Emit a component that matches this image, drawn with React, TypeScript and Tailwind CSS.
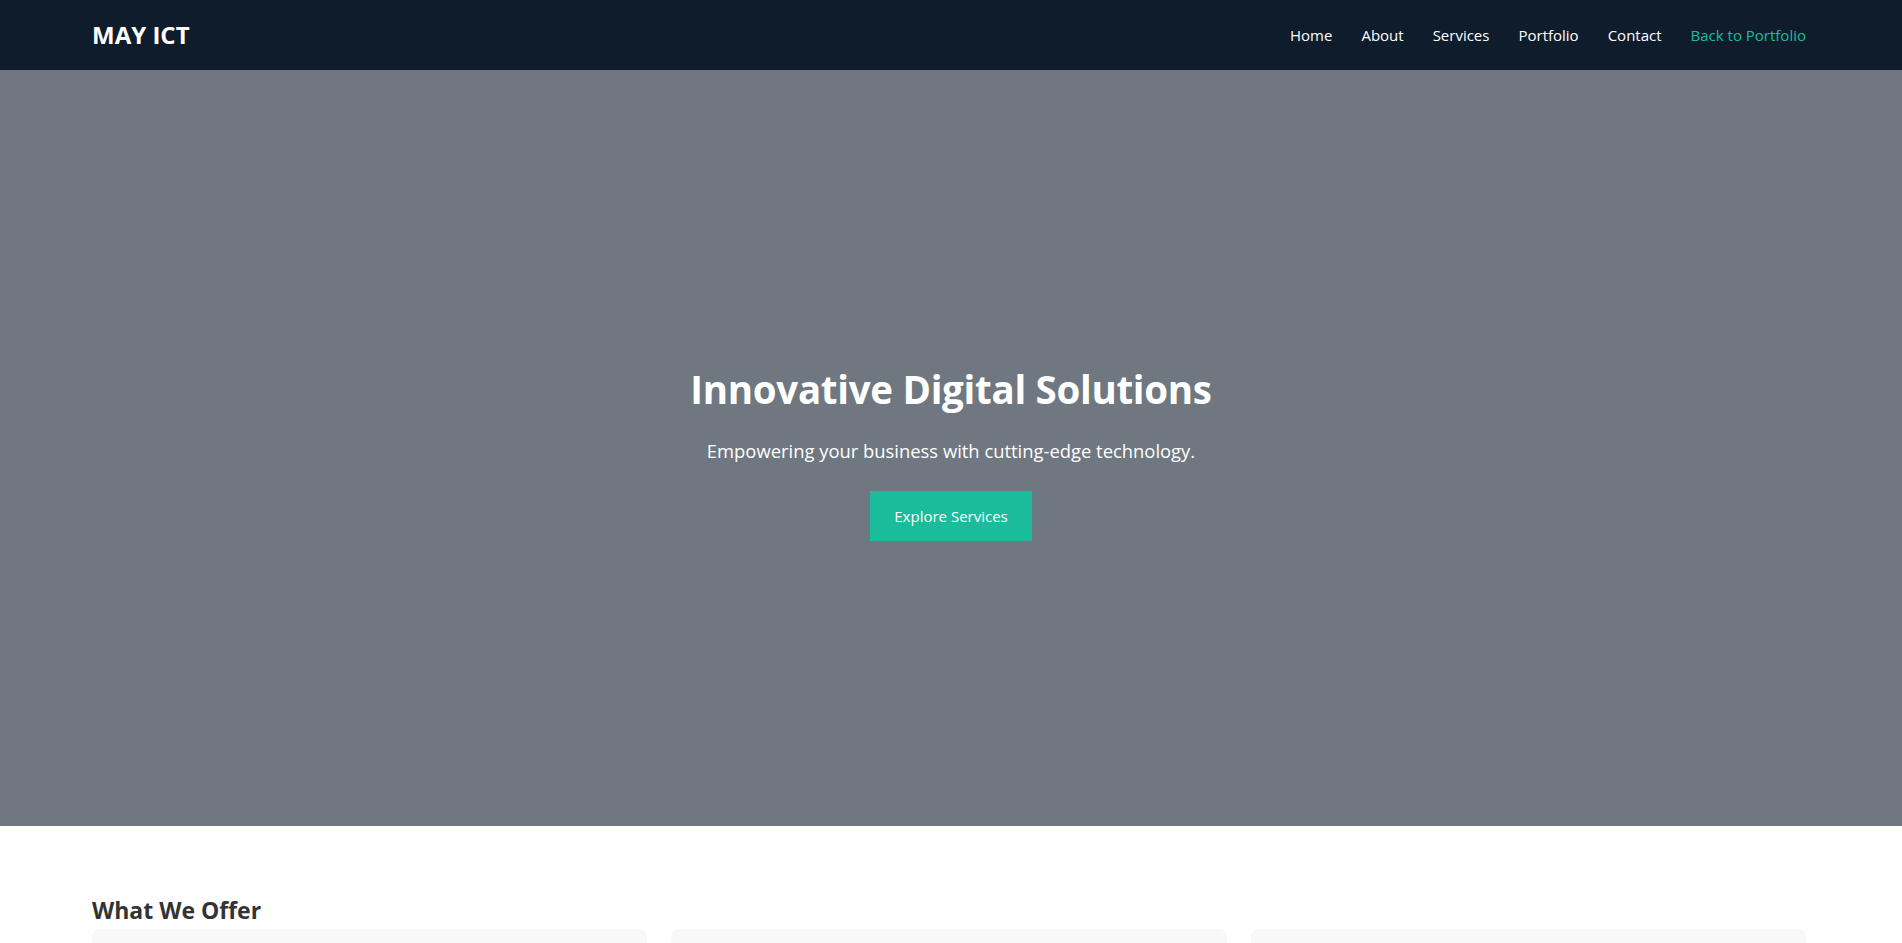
import React from 'react'

const links = ['Home', 'About', 'Services', 'Portfolio', 'Contact']

const offers = [
    { title: 'Web Development', text: 'Modern, responsive websites built for performance.' },
    { title: 'IT Consulting', text: 'Expert advice to guide your technology strategy.' },
    { title: 'Cloud Solutions', text: 'Secure and scalable infrastructure for growth.' },
]

const App = () => {
    return (
        <div className="min-h-screen bg-white font-['Open_Sans',sans-serif]">
            {/* Top nav */}
            <nav className="h-[70px] bg-[#0f1c2b] flex items-center justify-between pl-[92px] pr-[96px]">
                <a href="#" className="text-white text-[24px] font-bold">MAY ICT</a>
                <ul className="flex items-center gap-[29px] text-[15px]">
                    {links.map((l) => (
                        <li key={l}>
                            <a href="#" className="text-white">{l}</a>
                        </li>
                    ))}
                    <li>
                        <a href="#" className="text-[#1abc9c]">Back to Portfolio</a>
                    </li>
                </ul>
            </nav>

            {/* Hero */}
            <section className="h-[756px] pt-[10px] bg-[#6f7780] flex flex-col items-center justify-center text-white text-center">
                <h1 className="text-[38.5px] font-bold leading-[48px] tracking-[-0.3px]">Innovative Digital Solutions</h1>
                <p className="mt-[25px] text-[18.4px] leading-[26px]">Empowering your business with cutting-edge technology.</p>
                <a href="#" className="mt-[27px] bg-[#1abc9c] text-white text-[15px] leading-[24px] px-[24px] py-[13px]">Explore Services</a>
            </section>

            {/* Services */}
            <section className="pt-[70px] pb-16 pl-[92px] pr-[96px]">
                <h2 className="text-[23px] font-bold leading-[29px] text-[#333] mb-[4px]">What We Offer</h2>
                <div className="grid grid-cols-3 gap-6">
                    {offers.map((o) => (
                        <div key={o.title} className="bg-[#f8f8f8] rounded-lg p-6 min-h-[220px]">
                            <h3 className="text-xl font-semibold text-[#333]">{o.title}</h3>
                            <p className="mt-2 text-[#555]">{o.text}</p>
                        </div>
                    ))}
                </div>
            </section>
        </div>
    )
}

export default App
